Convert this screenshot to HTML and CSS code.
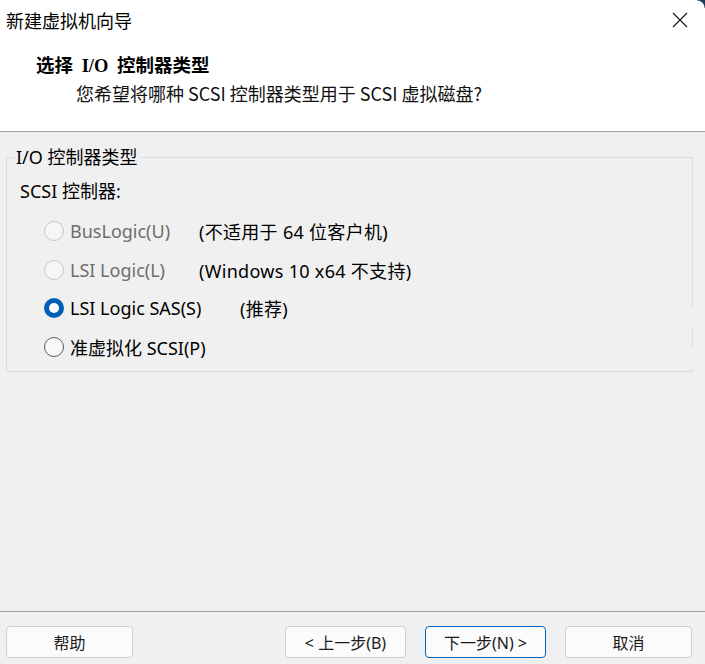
FILE: index.html
```html
<!DOCTYPE html>
<html lang="zh-CN">
<head>
<meta charset="utf-8">
<link rel="stylesheet" href="styles.css">
</head>
<body>
<div class="window">
  <header class="header">
    <div class="titlebar">
      <span class="title">新建虚拟机向导</span>
      <svg class="close" width="16" height="16" viewBox="0 0 16 16"><path d="M1 1 L15 15 M15 1 L1 15" stroke="#1a1a1a" stroke-width="1.2" fill="none"/></svg>
    </div>
    <div class="heading">选择 I/O 控制器类型</div>
    <div class="sub">您希望将哪种 SCSI 控制器类型用于 SCSI 虚拟磁盘?</div>
  </header>
  <main class="body">
    <fieldset class="group">
      <legend>I/O 控制器类型</legend>
      <div class="label">SCSI 控制器:</div>
      <div class="options">
        <div class="row">
          <span class="radio disabled"></span><span class="opt disabled-text">BusLogic(U)</span>
          <span class="note n1">(不适用于 64 位客户机)</span>
        </div>
        <div class="row">
          <span class="radio disabled"></span><span class="opt disabled-text">LSI Logic(L)</span>
          <span class="note n1">(Windows 10 x64 不支持)</span>
        </div>
        <div class="row">
          <span class="radio checked"></span><span class="opt">LSI Logic SAS(S)</span>
          <span class="note n2">(推荐)</span>
        </div>
        <div class="row">
          <span class="radio"></span><span class="opt">准虚拟化 SCSI(P)</span>
        </div>
      </div>
      <span class="gap g1"></span>
      <span class="gap g2"></span>
    </fieldset>
  </main>
  <footer class="footer">
    <button class="btn">帮助</button>
    <div class="spacer"></div>
    <button class="btn">&lt; 上一步(B)</button>
    <button class="btn primary">下一步(N) &gt;</button>
    <button class="btn">取消</button>
  </footer>
  <span class="corner"></span>
</div>
</body>
</html>
```
FILE: styles.css
```css
* { box-sizing: border-box; }
html, body { margin: 0; padding: 0; }
body {
  width: 705px;
  height: 664px;
  background: #f0f0f0;
  font-family: "Noto Sans", "Noto Sans CJK SC", sans-serif;
  color: #000;
  overflow: hidden;
}
.window {
  position: relative;
  width: 705px;
  height: 664px;
  display: flex;
  flex-direction: column;
}
.header {
  background: #fff;
  height: 132px;
  border-bottom: 1px solid #a0a0a0;
  flex: none;
}
.titlebar {
  height: 40px;
  display: flex;
  align-items: center;
  justify-content: space-between;
  padding: 0 17px 0 6px;
}
.title {
  font-family: "Noto Sans CJK SC", sans-serif;
  font-size: 18px;
  line-height: 24px;
  color: #000;
}
.close { display: block; }
.heading {
  margin-top: 14px;
  padding-left: 36px;
  font-family: "Liberation Serif", "Noto Sans CJK SC", serif;
  font-weight: 700;
  font-size: 18.5px;
  line-height: 24px;
  word-spacing: 4px;
}
.sub {
  margin-top: 3px;
  padding-left: 76px;
  font-family: "Noto Sans CJK SC", sans-serif;
  font-size: 18px;
  line-height: 24px;
  color: #111;
}
.body {
  flex: 1;
  padding: 13px 12px 0 6px;
}
.group {
  position: relative;
  margin: 0;
  width: 687px;
  height: 227px;
  border: 1px solid #dcdcdc;
  padding: 0 0 0 13px;
}
.group legend {
  padding: 0 2px;
  margin-left: -6px;
  font-size: 18px;
  line-height: 24px;
}
.label {
  margin-top: 10px;
  font-size: 18px;
  line-height: 24px;
}
.options {
  margin-top: 16px;
  padding-left: 24px;
  display: flex;
  flex-direction: column;
  gap: 14.6px;
}
.row {
  display: flex;
  align-items: center;
  height: 24px;
  font-size: 18px;
}
.radio {
  width: 20px;
  height: 20px;
  border-radius: 50%;
  border: 1px solid #5a5a5a;
  background: #f8f8f8;
  flex: none;
  position: relative;
}
.radio.disabled {
  border-color: #c6c6c6;
  background: #f6f6f6;
}
.radio.checked {
  border: none;
  background: #005fb8;
}
.radio.checked::after {
  content: "";
  position: absolute;
  left: 5px;
  top: 5px;
  width: 10px;
  height: 10px;
  border-radius: 50%;
  background: #fff;
}
.opt {
  margin-left: 6px;
  white-space: nowrap;
}
.disabled-text { color: #6d6d6d; }
.note { white-space: nowrap; color: #000; letter-spacing: 0.3px; }
.n1 { position: absolute; left: 192px; }
.n2 { position: absolute; left: 233px; }
.gap {
  position: absolute;
  right: -1px;
  width: 1px;
  background: #f0f0f0;
}
.g1 { top: 139px; height: 22px; }
.g2 { top: 178px; height: 22px; }
.footer {
  flex: none;
  height: 53px;
  border-top: 1px solid #a0a0a0;
  display: flex;
  align-items: flex-start;
  padding: 14px 13px 0 6px;
  gap: 19px;
}
.spacer { flex: 1; }
.btn {
  width: 127px;
  height: 32px;
  background: #fbfbfb;
  border: 1px solid #d0d0d0;
  border-radius: 4px;
  font-family: "Noto Sans", "Noto Sans CJK SC", sans-serif;
  font-size: 16px;
  color: #1a1a1a;
  padding: 0;
}
.footer .btn:nth-child(3), .footer .btn:nth-child(4) { width: 121px; }
.btn.primary { border-color: #0067c0; }
.corner {
  position: absolute;
  right: 0;
  top: 0;
  width: 8px;
  height: 8px;
  background: radial-gradient(circle at 0 100%, transparent 7px, #1e3a5a 8px);
}
```
